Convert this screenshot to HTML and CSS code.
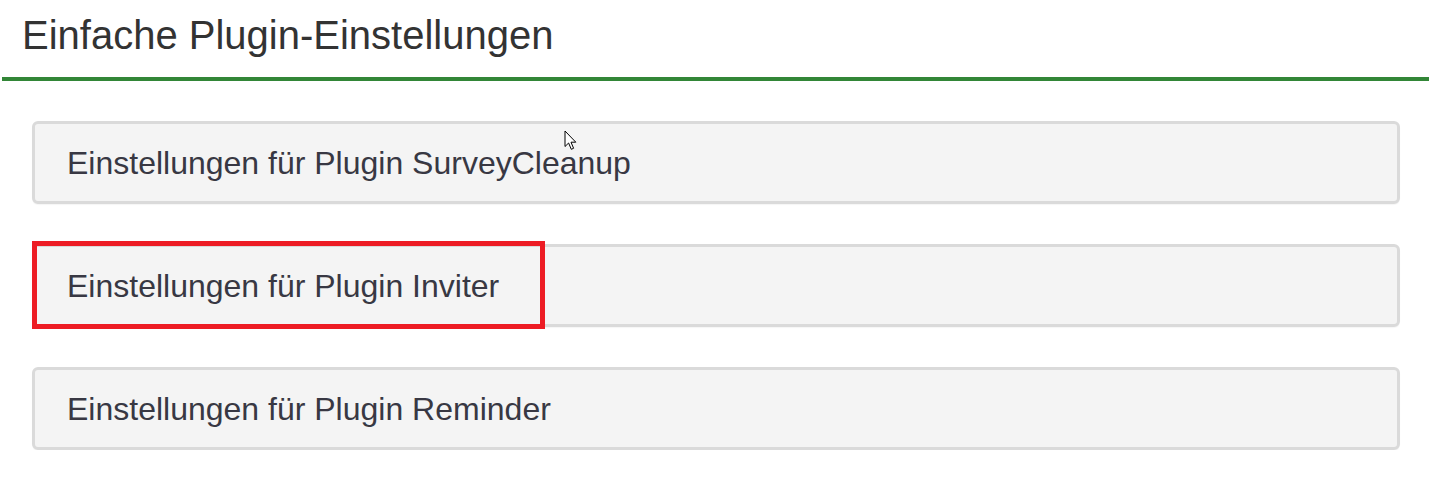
FILE: index.html
```html
<!DOCTYPE html>
<html lang="de">
<head>
<meta charset="utf-8">
<title>Einfache Plugin-Einstellungen</title>
<link rel="stylesheet" href="styles.css">
</head>
<body>
  <div class="page-header">
    <h1 class="page-title">Einfache Plugin-Einstellungen</h1>
  </div>
  <div class="plugin-list">
    <div class="plugin-card">
      <span class="plugin-label">Einstellungen für Plugin SurveyCleanup</span>
      <svg class="cursor" width="14" height="21" viewBox="0 0 14 21">
        <path d="M1 1 L1 16.5 L4.6 13 L7.3 19.3 L9.6 18.3 L7 12.2 L11.8 12.2 Z" fill="#fff" stroke="#000" stroke-width="1" stroke-linejoin="miter"/>
      </svg>
    </div>
    <div class="plugin-card">
      <span class="plugin-label">Einstellungen für Plugin Inviter</span>
      <div class="highlight"></div>
    </div>
    <div class="plugin-card">
      <span class="plugin-label">Einstellungen für Plugin Reminder</span>
    </div>
  </div>
</body>
</html>
```

FILE: styles.css
```css
html, body {
  margin: 0;
  padding: 0;
  background: #ffffff;
}

body {
  font-family: "Liberation Sans", Arial, sans-serif;
}

.page-header {
  margin-left: 2px;
  padding: 13px 0 20px 20px;
  border-bottom: 4px solid #328637;
}

.page-title {
  margin: 0;
  font-size: 40px;
  line-height: 44px;
  font-weight: normal;
  color: #333333;
}

.plugin-list {
  display: flex;
  flex-direction: column;
  gap: 40px;
  margin: 40px 29px 0 32px;
}

.plugin-card {
  position: relative;
  box-sizing: border-box;
  height: 83px;
  display: flex;
  align-items: center;
  padding-left: 32px;
  background: #f4f4f4;
  border: 3px solid #dadada;
  border-radius: 6px;
  box-shadow: 0 1px 1px rgba(0, 0, 0, 0.04);
}

.plugin-label {
  font-size: 32px;
  line-height: 38px;
  color: #383843;
}

.highlight {
  position: absolute;
  top: -6px;
  left: -3px;
  width: 513px;
  height: 88px;
  box-sizing: border-box;
  border: 5px solid #ed1c24;
}

.cursor {
  position: absolute;
  left: 529px;
  top: 6px;
}
```
